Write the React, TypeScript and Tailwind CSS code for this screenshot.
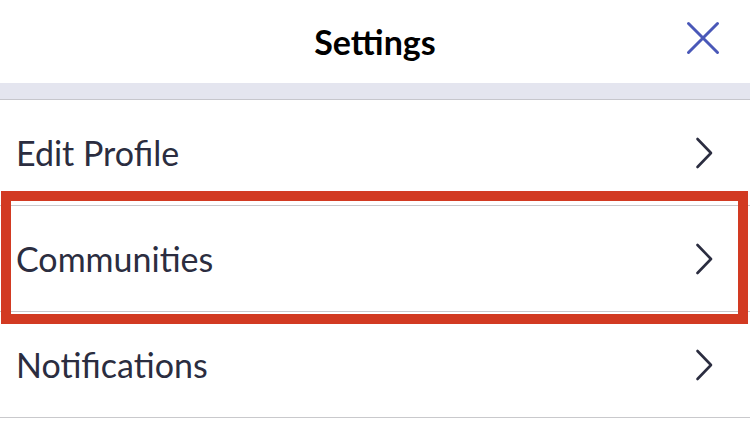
import React from "react";

const Chevron = () => (
  <svg width="18" height="32" viewBox="0 0 18 32" fill="none" className="shrink-0">
    <polyline points="2.5,2 16,16 2.5,30" stroke="#2b2d40" strokeWidth="2.6" strokeLinecap="round" strokeLinejoin="round" />
  </svg>
);

const Row = ({ label, highlight }: { label: string; highlight?: boolean }) => (
  <div className="relative flex h-[106px] items-center justify-between border-b border-[#c9c9cc] pl-[16px] pr-[37px]">
    <span className="text-[34px] leading-none text-[#2b2d40]" style={{ fontFamily: "Lato, 'Noto Sans', sans-serif" }}>
      {label}
    </span>
    <Chevron />
    {highlight && (
      <div className="pointer-events-none absolute left-[1px] right-[2px] top-[-15px] bottom-[-13px] border-[10px] border-[#d23a22]" />
    )}
  </div>
);

export default function App() {
  return (
    <div className="h-[434px] w-[750px] overflow-hidden bg-white" style={{ fontFamily: "Lato, 'Noto Sans', sans-serif" }}>
      <div className="relative flex h-[83px] items-center justify-center">
        <span className="text-[34px] font-bold leading-none text-black">Settings</span>
        <svg width="34" height="34" viewBox="0 0 34 34" className="absolute right-[30px] top-[21px]" fill="none">
          <path d="M2.5 2.5 L31.5 31.5 M31.5 2.5 L2.5 31.5" stroke="#4a58b8" strokeWidth="3" strokeLinecap="round" />
        </svg>
      </div>
      <div className="h-[17px] border-b border-[#c6c6cc] bg-[#e4e5ef]" />
      <Row label="Edit Profile" />
      <Row label="Communities" highlight />
      <Row label="Notifications" />
    </div>
  );
}
